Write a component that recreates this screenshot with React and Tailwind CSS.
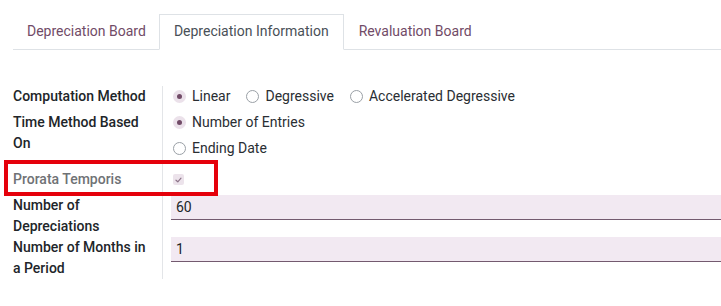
import React from "react";

function Radio({ checked, label }) {
  return (
    <div className="flex items-center">
      {checked ? (
        <span className="w-[13px] h-[13px] rounded-full bg-[#ebe1ea] flex items-center justify-center">
          <span className="w-[5px] h-[5px] rounded-full bg-[#714b67]" />
        </span>
      ) : (
        <span className="w-[13px] h-[13px] rounded-full border border-[#9aa0a6] bg-white" />
      )}
      <span className="ml-[6px] text-[#2a2e33]">{label}</span>
    </div>
  );
}

function Row({ label, children, pt = "", muted = false }) {
  return (
    <div className="grid grid-cols-[149px_1fr]">
      <div className={`${pt} font-medium ${muted ? "text-[#6f7275]" : "text-[#212529]"}`}>{label}</div>
      <div className={`${pt} border-l border-[#e3e5e8] pl-[10px] min-w-0`}>{children}</div>
    </div>
  );
}

function Field({ value }) {
  return (
    <div className="-ml-[2px] h-[25px] bg-[#f2e9f2] border-b border-[#735a6f] px-[5px] flex items-center text-[#212529]">
      {value}
    </div>
  );
}

export default function App() {
  return (
    <div
      className="relative w-[721px] h-[306px] bg-white overflow-hidden text-[14px] leading-[21px]"
      style={{ fontFamily: "Roboto, 'Noto Sans', sans-serif" }}
    >
      <div className="mt-[14px] ml-[13px] flex border-b border-[#dee2e6]">
        <div className="h-[36px] -mb-px pl-[13px] pr-[12px] pb-[2px] flex items-center border border-transparent text-[#714b67]">
          Depreciation Board
        </div>
        <div className="h-[36px] -mb-px px-[14px] pb-[2px] flex items-center border border-[#dee2e6] border-b-white bg-white text-[#495057]">
          Depreciation Information
        </div>
        <div className="h-[36px] -mb-px px-[14px] pb-[2px] flex items-center border border-transparent text-[#714b67]">
          Revaluation Board
        </div>
      </div>

      <div className="mt-[36px] ml-[13px] flex flex-col">
        <Row label="Computation Method">
          <div className="flex items-center h-[21px] gap-[16px]">
            <Radio checked label="Linear" />
            <Radio label="Degressive" />
            <Radio label="Accelerated Degressive" />
          </div>
        </Row>
        <Row
          pt="pt-[5px]"
          label={
            <>
              Time Method Based
              <br />
              On
            </>
          }
        >
          <div className="flex flex-col gap-[5px]">
            <Radio checked label="Number of Entries" />
            <Radio label="Ending Date" />
          </div>
        </Row>
        <Row pt="pt-[10px]" label="Prorata Temporis" muted>
          <div className="h-[21px] flex items-center">
            <span className="w-[11px] h-[11px] rounded-[2px] bg-[#ece3eb] flex items-center justify-center">
              <svg width="7" height="6" viewBox="0 0 7 6" fill="none">
                <path d="M1 3.2 L2.8 4.8 L6 1.2" stroke="#8c7388" strokeWidth="1.2" strokeLinecap="round" strokeLinejoin="round" />
              </svg>
            </span>
          </div>
        </Row>
        <Row
          pt="pt-[5px]"
          label={
            <>
              Number of
              <br />
              Depreciations
            </>
          }
        >
          <Field value="60" />
        </Row>
        <Row
          label={
            <>
              Number of Months in
              <br />
              a Period
            </>
          }
        >
          <Field value="1" />
        </Row>
      </div>

      <div className="absolute left-[4px] top-[160px] w-[214px] h-[36px] border-4 border-[#e5000b] pointer-events-none" />
    </div>
  );
}
